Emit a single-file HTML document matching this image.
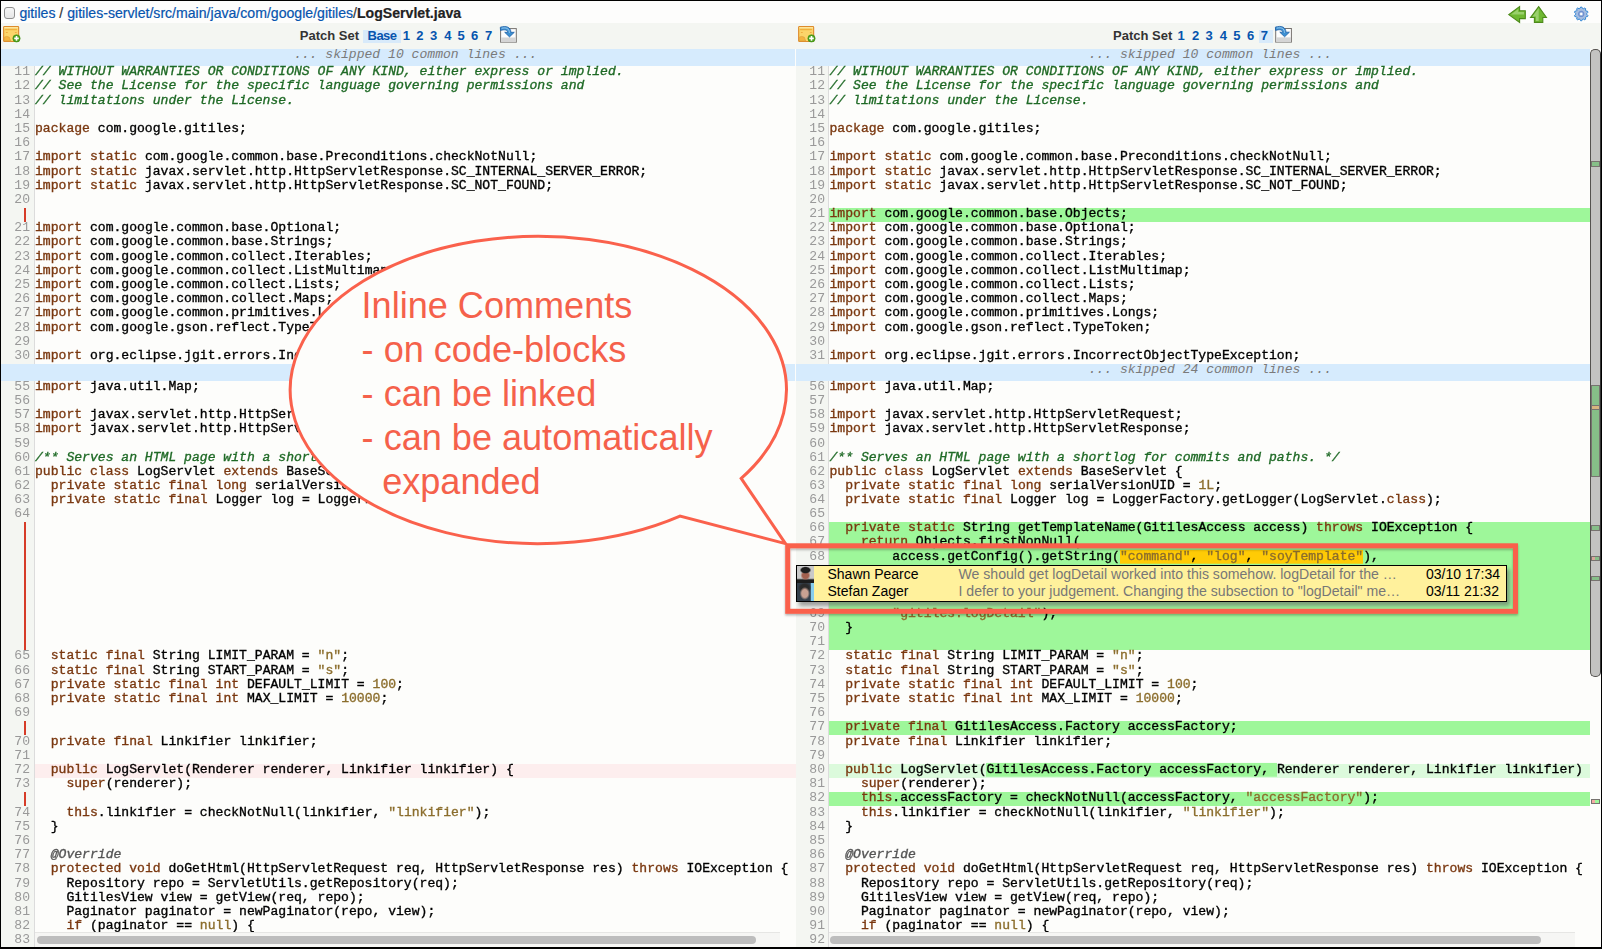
<!DOCTYPE html>
<html><head><meta charset="utf-8">
<style>
html,body{margin:0;padding:0}
body{width:1602px;height:949px;overflow:hidden;position:relative;background:#fdfdfb;font-family:"Liberation Sans",sans-serif}
.abs{position:absolute}
#hdr{position:absolute;left:0;top:0;width:1602px;height:23px;background:#fdfdfc}
#tb{position:absolute;left:1px;top:23px;width:1600px;height:26px;background:#f4f6f2}
.pane{position:absolute;top:0;height:947px;overflow:hidden}
#L{left:1px;width:795px}
#R{left:796px;width:794px}
.gut{position:absolute;top:49px;bottom:0;background:#f4f6f2;border-right:1px solid #dcdcdc}
#L .gut{left:0;width:33px}
#R .gut{left:0;width:32px}
.ln,.tx{position:absolute;font-family:"Liberation Mono",monospace;font-size:13.08px;line-height:14.2px;white-space:pre}
.ln{left:0;width:29px;text-align:right;color:#999}
.ln,.tx{margin-top:-0.7px;transform:scaleY(0.92);transform-origin:0 10.6px}
#L .tx{left:34px}
#R .tx{left:33.5px}
.tx{color:#000;-webkit-text-stroke:0.35px}
.k{color:#7a3810}
.s{color:#8b6d2c}
.an{color:#555}
.cm{color:#1f6a26;font-style:italic}
i{font-style:italic}
.bg{position:absolute;right:0}
#L .bg{left:34px}
#R .bg{left:33px}
.ins{background:#9ef79a}
.lins{background:#dcfadc}
.del{background:#fdeeee}
.intra{background:#9ef79a}
.rng{background:#ffcb05}
.pad{position:absolute;left:22.9px;width:2px;background:#d63c28}
.skip{position:absolute;left:0;right:0;height:16.9px;background:#d6ebfd}
#L .skip{right:1px}
.skip .st{position:absolute;top:0;font-family:"Liberation Mono",monospace;font-size:13.08px;line-height:14.2px;font-style:italic;color:#7a7a7a;white-space:pre}
.pd{top:5px;font-size:13px;line-height:16px;font-weight:bold;color:#0654ae;white-space:pre}
.ps{top:5px;font-size:13px;line-height:16px;font-weight:bold;color:#333;white-space:pre}
.hs{position:absolute;top:932px;height:15px;background:#f6f6f4;border-top:1px solid #e6e6e4}
.thumb{position:absolute;top:3px;height:8px;background:#bdbdbd;border-radius:4px}
.mk{position:absolute;left:1591px;width:7px;border:1px solid #77736f;background:#86bf88}
</style></head><body>
<div id="hdr">
  <div class="abs" style="left:3.5px;top:7.2px;width:9.5px;height:9.5px;border:1px solid #8f8f8f;border-radius:3px;background:linear-gradient(#f6f6f6,#e6e6e6)"></div>
  <div class="abs" style="left:19.4px;top:2.7px;font-size:14.1px;line-height:20px;color:#0654ae;white-space:pre;-webkit-text-stroke:0.2px">gitiles <span style="color:#333">/</span> gitiles-servlet/src/main/java/com/google/gitiles<span style="color:#333">/</span><b style="color:#222">LogServlet.java</b></div>
</div>
<div id="tb">
  <div class="abs ps" style="left:298.8px">Patch Set</div>
  <div class="abs" style="left:361.6px;top:7.2px;width:38px;height:12.5px;background:#d8eafa"></div>
  <div class="abs pd" style="left:366.6px;letter-spacing:-0.55px">Base</div><div class="abs pd" style="left:401.8px">1</div><div class="abs pd" style="left:415.3px">2</div><div class="abs pd" style="left:428.9px">3</div><div class="abs pd" style="left:443.3px">4</div><div class="abs pd" style="left:456.5px">5</div><div class="abs pd" style="left:469.9px">6</div><div class="abs pd" style="left:484.1px">7</div>
  <div class="abs ps" style="left:1112px">Patch Set</div>
  <div class="abs" style="left:1257.9px;top:7px;width:14px;height:12.6px;background:#d8eafa"></div>
  <div class="abs pd" style="left:1176.5px">1</div><div class="abs pd" style="left:1191.0px">2</div><div class="abs pd" style="left:1204.5px">3</div><div class="abs pd" style="left:1218.7px">4</div><div class="abs pd" style="left:1232.3px">5</div><div class="abs pd" style="left:1246.0px">6</div><div class="abs pd" style="left:1259.8px">7</div>
</div>
<svg class="abs" style="left:0;top:0" width="1602" height="49" viewBox="0 0 1602 49">
  <defs>
    <g id="note">
      <rect x="0.55" y="0.55" width="15" height="15" rx="0.8" fill="#fbd56a" stroke="#dd8b2c" stroke-width="1.1"/>
      <rect x="1.2" y="1.2" width="13.7" height="1.2" fill="#fde9a8"/>
      <rect x="2" y="2.8" width="11.8" height="1.4" fill="#f1b03c"/>
      <rect x="2.8" y="6.1" width="1.8" height="0.9" fill="#eea63d"/>
      <rect x="11.8" y="6.1" width="1.8" height="0.9" fill="#eea63d"/>
      <path d="M1.2,15 V11.2 Q3.5,9.6 6.2,11.2 L7.6,15 Z" fill="#f3b43f" stroke="#d99a3a" stroke-width="0.6"/>
      <circle cx="13.4" cy="12.4" r="3.7" fill="#4b9f1b" stroke="#3f8a15" stroke-width="0.5"/>
      <path d="M13.4,10.1 V14.7 M11.1,12.4 H15.7" stroke="#fff" stroke-width="1.6"/>
    </g>
    <g id="dl">
      <rect x="0.5" y="0.5" width="15.7" height="13.6" fill="#fdfdfd" stroke="#76726f" stroke-width="1"/>
      <rect x="1" y="9.4" width="14.7" height="4.7" fill="#d5d5d5"/>
      <path d="M0.2,-0.9 C6,-2.6 10.5,-1.2 10.8,4.2 L14.2,4.2 L9.4,8.8 L4.6,4.2 L7.6,4.2 C7.4,1.6 4,1.2 0.4,2.4 Z" fill="#3d90d2" stroke="#1e5fa6" stroke-width="0.8" stroke-linejoin="round"/>
      <path d="M1.5,0.2 C6,-0.9 9.3,0.2 9.3,4.8" fill="none" stroke="#a8d4f2" stroke-width="0.8"/>
    </g>
  </defs>
  <use href="#note" x="3.1" y="26"/>
  <use href="#note" x="798.1" y="26"/>
  <use href="#dl" x="500.1" y="28.1"/>
  <use href="#dl" x="1275.2" y="28"/>
  <polygon points="1508.7,14.6 1519.6,6.6 1519.6,10.7 1525.3,10.7 1525.3,18.6 1519.6,18.6 1519.6,22.4" fill="#6fb832" stroke="#4c8a1a" stroke-width="1.1"/>
  <polygon points="1511,14.5 1518.2,9 1518.2,12 1524,12 1524,14.5" fill="#a5d67a" opacity=".8"/>
  <polygon points="1538.7,6.6 1530.6,17.5 1534.4,17.5 1534.4,22.4 1542.8,22.4 1542.8,17.5 1546.4,17.5" fill="#6fb832" stroke="#4c8a1a" stroke-width="1.1"/>
  <polygon points="1538.7,8 1532.5,16.5 1536,16.5 1536,21 1538.7,21" fill="#a5d67a" opacity=".8"/>
  <g transform="translate(1581.2,13.9)">
    <path d="M-0.54,-6.88 L0.54,-6.88 L1.31,-5.45 L2.14,-5.17 L3.61,-5.88 L4.48,-5.25 L4.26,-3.64 L4.77,-2.93 L6.37,-2.64 L6.71,-1.61 L5.58,-0.44 L5.58,0.44 L6.71,1.61 L6.37,2.64 L4.77,2.93 L4.26,3.64 L4.48,5.25 L3.61,5.88 L2.14,5.17 L1.31,5.45 L0.54,6.88 L-0.54,6.88 L-1.31,5.45 L-2.14,5.17 L-3.61,5.88 L-4.48,5.25 L-4.26,3.64 L-4.77,2.93 L-6.37,2.64 L-6.71,1.61 L-5.58,0.44 L-5.58,-0.44 L-6.71,-1.61 L-6.37,-2.64 L-4.77,-2.93 L-4.26,-3.64 L-4.48,-5.25 L-3.61,-5.88 L-2.14,-5.17 L-1.31,-5.45 Z" fill="#a4bde0" stroke="#2f86d6" stroke-width="1" stroke-linejoin="round"/>
    <circle r="2.6" fill="none" stroke="#6f8fd0" stroke-width="1.2"/>
    <circle r="1.2" fill="#fff"/>
  </g>
</svg>

<div class="pane" id="L">
  <div class="gut"></div>
  <div class="skip" style="top:48.9px"><div class="st" style="left:292.9px;top:-0.9px">... skipped 10 common lines ...</div></div>
  <div class="skip" style="top:363.9px"><div class="st" style="left:292.9px;top:-0.7px">... skipped 24 common lines ...</div></div>
<div class="ln" style="top:65.90px">11</div>
<div class="tx" style="top:65.90px"><span class="cm">// WITHOUT WARRANTIES OR CONDITIONS OF ANY KIND, either express or implied.</span></div>
<div class="ln" style="top:80.09px">12</div>
<div class="tx" style="top:80.09px"><span class="cm">// See the License for the specific language governing permissions and</span></div>
<div class="ln" style="top:94.28px">13</div>
<div class="tx" style="top:94.28px"><span class="cm">// limitations under the License.</span></div>
<div class="ln" style="top:108.47px">14</div>
<div class="ln" style="top:122.66px">15</div>
<div class="tx" style="top:122.66px"><span class="k">package</span> com.google.gitiles;</div>
<div class="ln" style="top:136.85px">16</div>
<div class="ln" style="top:151.04px">17</div>
<div class="tx" style="top:151.04px"><span class="k">import</span> <span class="k">static</span> com.google.common.base.Preconditions.checkNotNull;</div>
<div class="ln" style="top:165.23px">18</div>
<div class="tx" style="top:165.23px"><span class="k">import</span> <span class="k">static</span> javax.servlet.http.HttpServletResponse.SC_INTERNAL_SERVER_ERROR;</div>
<div class="ln" style="top:179.42px">19</div>
<div class="tx" style="top:179.42px"><span class="k">import</span> <span class="k">static</span> javax.servlet.http.HttpServletResponse.SC_NOT_FOUND;</div>
<div class="ln" style="top:193.61px">20</div>
<div class="pad" style="top:208.10px;height:13.59px"></div>
<div class="ln" style="top:221.99px">21</div>
<div class="tx" style="top:221.99px"><span class="k">import</span> com.google.common.base.Optional;</div>
<div class="ln" style="top:236.18px">22</div>
<div class="tx" style="top:236.18px"><span class="k">import</span> com.google.common.base.Strings;</div>
<div class="ln" style="top:250.37px">23</div>
<div class="tx" style="top:250.37px"><span class="k">import</span> com.google.common.collect.Iterables;</div>
<div class="ln" style="top:264.56px">24</div>
<div class="tx" style="top:264.56px"><span class="k">import</span> com.google.common.collect.ListMultimap;</div>
<div class="ln" style="top:278.75px">25</div>
<div class="tx" style="top:278.75px"><span class="k">import</span> com.google.common.collect.Lists;</div>
<div class="ln" style="top:292.94px">26</div>
<div class="tx" style="top:292.94px"><span class="k">import</span> com.google.common.collect.Maps;</div>
<div class="ln" style="top:307.13px">27</div>
<div class="tx" style="top:307.13px"><span class="k">import</span> com.google.common.primitives.Longs;</div>
<div class="ln" style="top:321.32px">28</div>
<div class="tx" style="top:321.32px"><span class="k">import</span> com.google.gson.reflect.TypeToken;</div>
<div class="ln" style="top:335.51px">29</div>
<div class="ln" style="top:349.70px">30</div>
<div class="tx" style="top:349.70px"><span class="k">import</span> org.eclipse.jgit.errors.IncorrectObjectTypeException;</div>
<div class="ln" style="top:380.80px">55</div>
<div class="tx" style="top:380.80px"><span class="k">import</span> java.util.Map;</div>
<div class="ln" style="top:394.92px">56</div>
<div class="ln" style="top:409.04px">57</div>
<div class="tx" style="top:409.04px"><span class="k">import</span> javax.servlet.http.HttpServletRequest;</div>
<div class="ln" style="top:423.16px">58</div>
<div class="tx" style="top:423.16px"><span class="k">import</span> javax.servlet.http.HttpServletResponse;</div>
<div class="ln" style="top:437.28px">59</div>
<div class="ln" style="top:451.40px">60</div>
<div class="tx" style="top:451.40px"><span class="cm">/** Serves an HTML page with a shortlog for commits and paths. */</span></div>
<div class="ln" style="top:465.52px">61</div>
<div class="tx" style="top:465.52px"><span class="k">public</span> <span class="k">class</span> LogServlet <span class="k">extends</span> BaseServlet {</div>
<div class="ln" style="top:479.64px">62</div>
<div class="tx" style="top:479.64px">  <span class="k">private</span> <span class="k">static</span> <span class="k">final</span> <span class="k">long</span> serialVersionUID = <span class="s">1L</span>;</div>
<div class="ln" style="top:493.76px">63</div>
<div class="tx" style="top:493.76px">  <span class="k">private</span> <span class="k">static</span> <span class="k">final</span> Logger log = LoggerFactory.getLogger(LogServlet.<span class="k">class</span>);</div>
<div class="ln" style="top:507.88px">64</div>
<div class="pad" style="top:522.1px;height:127.9px"></div>
<div class="ln" style="top:650.17px">65</div>
<div class="tx" style="top:650.17px">  <span class="k">static</span> <span class="k">final</span> String LIMIT_PARAM = <span class="s">&quot;n&quot;</span>;</div>
<div class="ln" style="top:664.36px">66</div>
<div class="tx" style="top:664.36px">  <span class="k">static</span> <span class="k">final</span> String START_PARAM = <span class="s">&quot;s&quot;</span>;</div>
<div class="ln" style="top:678.55px">67</div>
<div class="tx" style="top:678.55px">  <span class="k">private</span> <span class="k">static</span> <span class="k">final</span> <span class="k">int</span> DEFAULT_LIMIT = <span class="s">100</span>;</div>
<div class="ln" style="top:692.74px">68</div>
<div class="tx" style="top:692.74px">  <span class="k">private</span> <span class="k">static</span> <span class="k">final</span> <span class="k">int</span> MAX_LIMIT = <span class="s">10000</span>;</div>
<div class="ln" style="top:706.93px">69</div>
<div class="pad" style="top:721.42px;height:13.59px"></div>
<div class="ln" style="top:735.31px">70</div>
<div class="tx" style="top:735.31px">  <span class="k">private</span> <span class="k">final</span> Linkifier linkifier;</div>
<div class="ln" style="top:749.50px">71</div>
<div class="bg del" style="top:763.69px;height:14.19px"></div>
<div class="ln" style="top:763.69px">72</div>
<div class="tx" style="top:763.69px">  <span class="k">public</span> LogServlet(Renderer renderer, Linkifier linkifier) {</div>
<div class="ln" style="top:777.88px">73</div>
<div class="tx" style="top:777.88px">    <span class="k">super</span>(renderer);</div>
<div class="pad" style="top:792.37px;height:13.59px"></div>
<div class="ln" style="top:806.26px">74</div>
<div class="tx" style="top:806.26px">    <span class="k">this</span>.linkifier = checkNotNull(linkifier, <span class="s">&quot;linkifier&quot;</span>);</div>
<div class="ln" style="top:820.45px">75</div>
<div class="tx" style="top:820.45px">  }</div>
<div class="ln" style="top:834.64px">76</div>
<div class="ln" style="top:848.83px">77</div>
<div class="tx" style="top:848.83px">  <i class="an">@Override</i></div>
<div class="ln" style="top:863.02px">78</div>
<div class="tx" style="top:863.02px">  <span class="k">protected</span> <span class="k">void</span> doGetHtml(HttpServletRequest req, HttpServletResponse res) <span class="k">throws</span> IOException {</div>
<div class="ln" style="top:877.21px">79</div>
<div class="tx" style="top:877.21px">    Repository repo = ServletUtils.getRepository(req);</div>
<div class="ln" style="top:891.40px">80</div>
<div class="tx" style="top:891.40px">    GitilesView view = getView(req, repo);</div>
<div class="ln" style="top:905.59px">81</div>
<div class="tx" style="top:905.59px">    Paginator paginator = newPaginator(repo, view);</div>
<div class="ln" style="top:919.78px">82</div>
<div class="tx" style="top:919.78px">    <span class="k">if</span> (paginator == <span class="s">null</span>) {</div>
<div class="ln" style="top:933.97px">83</div>
  <div class="hs" style="left:34px;width:745px"><div class="thumb" style="left:2px;width:719px"></div></div>
</div>
<div class="pane" id="R">
  <div class="gut"></div>
  <div class="skip" style="top:48.9px"><div class="st" style="left:292.5px;top:-0.8px">... skipped 10 common lines ...</div></div>
  <div class="skip" style="top:363.9px"><div class="st" style="left:292.5px;top:-0.8px">... skipped 24 common lines ...</div></div>
<div class="bg ins" style="top:564.2px;height:43.5px"></div>
<div class="ln" style="top:65.90px">11</div>
<div class="tx" style="top:65.90px"><span class="cm">// WITHOUT WARRANTIES OR CONDITIONS OF ANY KIND, either express or implied.</span></div>
<div class="ln" style="top:80.09px">12</div>
<div class="tx" style="top:80.09px"><span class="cm">// See the License for the specific language governing permissions and</span></div>
<div class="ln" style="top:94.28px">13</div>
<div class="tx" style="top:94.28px"><span class="cm">// limitations under the License.</span></div>
<div class="ln" style="top:108.47px">14</div>
<div class="ln" style="top:122.66px">15</div>
<div class="tx" style="top:122.66px"><span class="k">package</span> com.google.gitiles;</div>
<div class="ln" style="top:136.85px">16</div>
<div class="ln" style="top:151.04px">17</div>
<div class="tx" style="top:151.04px"><span class="k">import</span> <span class="k">static</span> com.google.common.base.Preconditions.checkNotNull;</div>
<div class="ln" style="top:165.23px">18</div>
<div class="tx" style="top:165.23px"><span class="k">import</span> <span class="k">static</span> javax.servlet.http.HttpServletResponse.SC_INTERNAL_SERVER_ERROR;</div>
<div class="ln" style="top:179.42px">19</div>
<div class="tx" style="top:179.42px"><span class="k">import</span> <span class="k">static</span> javax.servlet.http.HttpServletResponse.SC_NOT_FOUND;</div>
<div class="ln" style="top:193.61px">20</div>
<div class="bg ins" style="top:207.80px;height:14.19px"></div>
<div class="ln" style="top:207.80px">21</div>
<div class="tx" style="top:207.80px"><span class="k">import</span> com.google.common.base.Objects;</div>
<div class="ln" style="top:221.99px">22</div>
<div class="tx" style="top:221.99px"><span class="k">import</span> com.google.common.base.Optional;</div>
<div class="ln" style="top:236.18px">23</div>
<div class="tx" style="top:236.18px"><span class="k">import</span> com.google.common.base.Strings;</div>
<div class="ln" style="top:250.37px">24</div>
<div class="tx" style="top:250.37px"><span class="k">import</span> com.google.common.collect.Iterables;</div>
<div class="ln" style="top:264.56px">25</div>
<div class="tx" style="top:264.56px"><span class="k">import</span> com.google.common.collect.ListMultimap;</div>
<div class="ln" style="top:278.75px">26</div>
<div class="tx" style="top:278.75px"><span class="k">import</span> com.google.common.collect.Lists;</div>
<div class="ln" style="top:292.94px">27</div>
<div class="tx" style="top:292.94px"><span class="k">import</span> com.google.common.collect.Maps;</div>
<div class="ln" style="top:307.13px">28</div>
<div class="tx" style="top:307.13px"><span class="k">import</span> com.google.common.primitives.Longs;</div>
<div class="ln" style="top:321.32px">29</div>
<div class="tx" style="top:321.32px"><span class="k">import</span> com.google.gson.reflect.TypeToken;</div>
<div class="ln" style="top:335.51px">30</div>
<div class="ln" style="top:349.70px">31</div>
<div class="tx" style="top:349.70px"><span class="k">import</span> org.eclipse.jgit.errors.IncorrectObjectTypeException;</div>
<div class="ln" style="top:380.80px">56</div>
<div class="tx" style="top:380.80px"><span class="k">import</span> java.util.Map;</div>
<div class="ln" style="top:394.92px">57</div>
<div class="ln" style="top:409.04px">58</div>
<div class="tx" style="top:409.04px"><span class="k">import</span> javax.servlet.http.HttpServletRequest;</div>
<div class="ln" style="top:423.16px">59</div>
<div class="tx" style="top:423.16px"><span class="k">import</span> javax.servlet.http.HttpServletResponse;</div>
<div class="ln" style="top:437.28px">60</div>
<div class="ln" style="top:451.40px">61</div>
<div class="tx" style="top:451.40px"><span class="cm">/** Serves an HTML page with a shortlog for commits and paths. */</span></div>
<div class="ln" style="top:465.52px">62</div>
<div class="tx" style="top:465.52px"><span class="k">public</span> <span class="k">class</span> LogServlet <span class="k">extends</span> BaseServlet {</div>
<div class="ln" style="top:479.64px">63</div>
<div class="tx" style="top:479.64px">  <span class="k">private</span> <span class="k">static</span> <span class="k">final</span> <span class="k">long</span> serialVersionUID = <span class="s">1L</span>;</div>
<div class="ln" style="top:493.76px">64</div>
<div class="tx" style="top:493.76px">  <span class="k">private</span> <span class="k">static</span> <span class="k">final</span> Logger log = LoggerFactory.getLogger(LogServlet.<span class="k">class</span>);</div>
<div class="ln" style="top:507.88px">65</div>
<div class="bg ins" style="top:522.00px;height:14.12px"></div>
<div class="ln" style="top:522.00px">66</div>
<div class="tx" style="top:522.00px">  <span class="k">private</span> <span class="k">static</span> String getTemplateName(GitilesAccess access) <span class="k">throws</span> IOException {</div>
<div class="bg ins" style="top:536.12px;height:14.12px"></div>
<div class="ln" style="top:536.12px">67</div>
<div class="tx" style="top:536.12px">    <span class="k">return</span> Objects.firstNonNull(</div>
<div class="bg ins" style="top:550.24px;height:14.12px"></div>
<div class="ln" style="top:550.24px">68</div>
<div class="tx" style="top:550.24px">        access.getConfig().getString(<span class="rng"><span class="s">&quot;command&quot;</span>, <span class="s">&quot;log&quot;</span>, <span class="s">&quot;soyTemplate&quot;</span></span>),</div>
<div class="bg ins" style="top:607.60px;height:14.19px"></div>
<div class="ln" style="top:607.60px">69</div>
<div class="tx" style="top:607.60px">        <span class="s">&quot;gitiles.logDetail&quot;</span>);</div>
<div class="bg ins" style="top:621.79px;height:14.19px"></div>
<div class="ln" style="top:621.79px">70</div>
<div class="tx" style="top:621.79px">  }</div>
<div class="bg ins" style="top:635.98px;height:14.19px"></div>
<div class="ln" style="top:635.98px">71</div>
<div class="ln" style="top:650.17px">72</div>
<div class="tx" style="top:650.17px">  <span class="k">static</span> <span class="k">final</span> String LIMIT_PARAM = <span class="s">&quot;n&quot;</span>;</div>
<div class="ln" style="top:664.36px">73</div>
<div class="tx" style="top:664.36px">  <span class="k">static</span> <span class="k">final</span> String START_PARAM = <span class="s">&quot;s&quot;</span>;</div>
<div class="ln" style="top:678.55px">74</div>
<div class="tx" style="top:678.55px">  <span class="k">private</span> <span class="k">static</span> <span class="k">final</span> <span class="k">int</span> DEFAULT_LIMIT = <span class="s">100</span>;</div>
<div class="ln" style="top:692.74px">75</div>
<div class="tx" style="top:692.74px">  <span class="k">private</span> <span class="k">static</span> <span class="k">final</span> <span class="k">int</span> MAX_LIMIT = <span class="s">10000</span>;</div>
<div class="ln" style="top:706.93px">76</div>
<div class="bg ins" style="top:721.12px;height:14.19px"></div>
<div class="ln" style="top:721.12px">77</div>
<div class="tx" style="top:721.12px">  <span class="k">private</span> <span class="k">final</span> GitilesAccess.Factory accessFactory;</div>
<div class="ln" style="top:735.31px">78</div>
<div class="tx" style="top:735.31px">  <span class="k">private</span> <span class="k">final</span> Linkifier linkifier;</div>
<div class="ln" style="top:749.50px">79</div>
<div class="bg lins" style="top:763.69px;height:14.19px"></div>
<div class="ln" style="top:763.69px">80</div>
<div class="tx" style="top:763.69px">  <span class="k">public</span> LogServlet(<span class="intra">GitilesAccess.Factory accessFactory, </span>Renderer renderer, Linkifier linkifier) {</div>
<div class="ln" style="top:777.88px">81</div>
<div class="tx" style="top:777.88px">    <span class="k">super</span>(renderer);</div>
<div class="bg ins" style="top:792.07px;height:14.19px"></div>
<div class="ln" style="top:792.07px">82</div>
<div class="tx" style="top:792.07px">    <span class="k">this</span>.accessFactory = checkNotNull(accessFactory, <span class="s">&quot;accessFactory&quot;</span>);</div>
<div class="ln" style="top:806.26px">83</div>
<div class="tx" style="top:806.26px">    <span class="k">this</span>.linkifier = checkNotNull(linkifier, <span class="s">&quot;linkifier&quot;</span>);</div>
<div class="ln" style="top:820.45px">84</div>
<div class="tx" style="top:820.45px">  }</div>
<div class="ln" style="top:834.64px">85</div>
<div class="ln" style="top:848.83px">86</div>
<div class="tx" style="top:848.83px">  <i class="an">@Override</i></div>
<div class="ln" style="top:863.02px">87</div>
<div class="tx" style="top:863.02px">  <span class="k">protected</span> <span class="k">void</span> doGetHtml(HttpServletRequest req, HttpServletResponse res) <span class="k">throws</span> IOException {</div>
<div class="ln" style="top:877.21px">88</div>
<div class="tx" style="top:877.21px">    Repository repo = ServletUtils.getRepository(req);</div>
<div class="ln" style="top:891.40px">89</div>
<div class="tx" style="top:891.40px">    GitilesView view = getView(req, repo);</div>
<div class="ln" style="top:905.59px">90</div>
<div class="tx" style="top:905.59px">    Paginator paginator = newPaginator(repo, view);</div>
<div class="ln" style="top:919.78px">91</div>
<div class="tx" style="top:919.78px">    <span class="k">if</span> (paginator == <span class="s">null</span>) {</div>
<div class="ln" style="top:933.97px">92</div>
  <div class="hs" style="left:33px;width:746px"><div class="thumb" style="left:1px;width:711px"></div></div>
</div>

<!-- overview ruler -->
<div class="abs" style="left:1590px;top:49px;width:11px;height:898px;background:#fdfdfb"></div>
<div class="abs" style="left:1590px;top:49px;width:9px;height:626px;border:1px solid #55534f;border-right-color:#333;border-radius:5px;background:#c3c3c1"></div>
<div class="mk" style="top:161px;height:4px"></div>
<div class="mk" style="top:385.2px;height:89.5px"></div>
<div class="mk" style="top:405.4px;height:2.2px;background:#d8b57f"></div>
<div class="mk" style="top:525.1px;height:3.8px"></div>
<div class="mk" style="top:555.5px;height:3.2px;background:linear-gradient(90deg,#d9a79c 0 45%,#86bf88 45%)"></div>
<div class="mk" style="top:575.9px;height:2.8px"></div>
<div class="mk" style="top:799.3px;height:2.5px;background:linear-gradient(90deg,#f5aaa5 0 45%,#9ef79a 45%)"></div>

<!-- comment widget -->
<div class="abs" style="left:796px;top:565.2px;width:708.7px;height:34.5px;border:1px solid #000;background:#fff19c;box-shadow:3px 4px 4px rgba(100,100,100,.6)">
  <div class="abs" style="left:0;top:0;width:17px;height:17px;background:radial-gradient(ellipse 34% 22% at 50% 24%,#1e1e1e 0 70%,rgba(0,0,0,0) 100%),radial-gradient(ellipse 30% 30% at 50% 55%,#a3604e 0 60%,rgba(0,0,0,0) 100%),linear-gradient(#c9c9c9 0 72%,#1c1c1c 82%)"></div>
  <div class="abs" style="left:0;top:17px;width:17px;height:17.5px;background:radial-gradient(ellipse 30% 36% at 46% 58%,#c9a192 0 60%,rgba(0,0,0,0) 100%),radial-gradient(ellipse 40% 30% at 45% 26%,#2a2a2a 0 60%,rgba(0,0,0,0) 100%),linear-gradient(90deg,#34404c 0 78%,#86cdee 84%)"></div>
  <div class="abs" style="left:30.5px;top:0;font-size:14px;line-height:17px;color:#000;white-space:pre">Shawn Pearce<br>Stefan Zager</div>
  <div class="abs" style="left:161.5px;top:-0.5px;font-size:14.1px;line-height:17px;color:#777;white-space:pre">We should get logDetail worked into this somehow. logDetail for the …<br>I defer to your judgement. Changing the subsection to "logDetail" me…</div>
  <div class="abs" style="left:629px;top:0;font-size:14px;line-height:17px;color:#000;white-space:pre">03/10 17:34<br>03/11 21:32</div>
</div>

<!-- bubble -->
<svg class="abs" style="left:0;top:0" width="1602" height="949" viewBox="0 0 1602 949">
  <defs><filter id="sh" x="-5%" y="-5%" width="110%" height="120%"><feDropShadow dx="0" dy="1.5" stdDeviation="1" flood-color="#000" flood-opacity=".3"/></filter></defs>
  <rect x="787.7" y="545.8" width="727.8" height="65.5" fill="none" stroke="#fa614c" stroke-width="5" filter="url(#sh)"/>
  <path d="M 741.2,478.4 A 248.1 153.65 0 1 0 680,516.1 L 785.5,543.6 Z" fill="#fdfdfb" stroke="#fa614c" stroke-width="3" stroke-linejoin="miter" stroke-miterlimit="20"/>
  <g fill="#f5614b" font-family="Liberation Sans" font-size="36.1">
    <text x="361.6" y="317.6">Inline Comments</text>
    <text x="361.6" y="361.6">- on code-blocks</text>
    <text x="361.6" y="405.6">- can be linked</text>
    <text x="361.6" y="449.6">- can be automatically</text>
    <text x="382.2" y="493.6">expanded</text>
  </g>
</svg>

<!-- frame -->
<div class="abs" style="left:0;top:0;width:1602px;height:1px;background:#000"></div>
<div class="abs" style="left:0;top:0;width:1px;height:949px;background:#000"></div>
<div class="abs" style="left:1600.5px;top:0;width:1.5px;height:949px;background:#000"></div>
<div class="abs" style="left:0;top:947px;width:1602px;height:2px;background:#000"></div>
</body></html>
